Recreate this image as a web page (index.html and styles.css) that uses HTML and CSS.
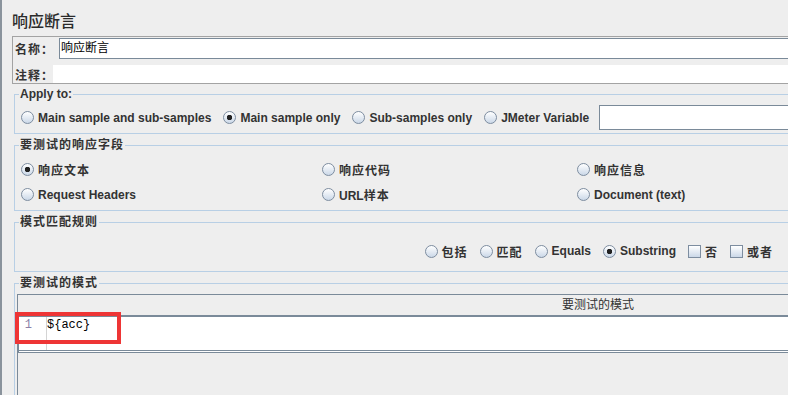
FILE: index.html
```html
<!DOCTYPE html>
<html lang="zh-CN">
<head>
    <meta charset="UTF-8">
    <title>响应断言</title>
    <link rel="stylesheet" href="styles.css">
</head>
<body>
    <div class="page">
        <h1 class="title">响应断言</h1>

        <div class="namebox">
            <div class="name-row">
                <span class="name-label zh">名称：</span>
                <div class="name-field">响应断言</div>
            </div>
            <div class="comment-row">
                <span class="comment-label zh">注释：</span>
                <div class="comment-field"></div>
            </div>
        </div>

        <!-- Apply to -->
        <div class="group group-apply">
            <div class="group-title">Apply to:</div>
            <div class="apply-row">
                <span class="opt"><span class="radio"></span>Main sample and sub-samples</span>
                <span class="opt"><span class="radio checked"></span>Main sample only</span>
                <span class="opt"><span class="radio"></span>Sub-samples only</span>
                <span class="opt"><span class="radio"></span>JMeter Variable</span>
                <div class="var-field"></div>
            </div>
        </div>

        <!-- 要测试的响应字段 -->
        <div class="group">
            <div class="group-title zh">要测试的响应字段</div>
            <div class="fields-grid">
                <span class="opt"><span class="radio checked"></span><span class="zh">响应文本</span></span>
                <span class="opt"><span class="radio"></span><span class="zh">响应代码</span></span>
                <span class="opt"><span class="radio"></span><span class="zh">响应信息</span></span>
                <span class="opt"><span class="radio"></span>Request Headers</span>
                <span class="opt"><span class="radio"></span><span>URL<span class="zh">样本</span></span></span>
                <span class="opt"><span class="radio"></span>Document (text)</span>
            </div>
        </div>

        <!-- 模式匹配规则 -->
        <div class="group">
            <div class="group-title zh">模式匹配规则</div>
            <div class="match-row">
                <span class="opt"><span class="radio"></span><span class="zh">包括</span></span>
                <span class="opt"><span class="radio"></span><span class="zh">匹配</span></span>
                <span class="opt"><span class="radio"></span>Equals</span>
                <span class="opt"><span class="radio checked"></span>Substring</span>
                <span class="opt"><span class="check"></span><span class="zh">否</span></span>
                <span class="opt"><span class="check"></span><span class="zh">或者</span></span>
            </div>
        </div>

        <!-- 要测试的模式 -->
        <div class="group">
            <div class="group-title zh">要测试的模式</div>
            <div class="table">
                <div class="table-head">要测试的模式</div>
                <div class="editor">
                    <div class="gutter">1</div>
                    <div class="code">${acc}</div>
                    <div class="mark"></div>
                </div>
            </div>
        </div>
    </div>
</body>
</html>
```

FILE: styles.css
```css
body {
    margin: 0;
    background-color: #eeeeee;
    overflow: hidden;
    font-family: "Liberation Sans", "Noto Sans CJK SC", sans-serif;
    font-size: 12px;
    color: #333;
}

.page {
    width: 800px;
    height: 395px;
    box-sizing: border-box;
    border-left: 2px solid #8a939c;
    padding: 10px 0 0 10px;
    overflow: hidden;
}

.title {
    margin: 0 0 6px;
    font-family: "Noto Sans CJK SC", sans-serif;
    font-size: 16px;
    line-height: 20px;
    font-weight: 500;
    color: #2b2b2b;
}

.zh {
    letter-spacing: 1px;
}

/* name / comment box */
.namebox {
    border: 1px solid #a3a3a3;
    border-right: none;
    padding: 1px 0 0 1px;
}

.name-row,
.comment-row {
    display: flex;
    align-items: center;
}

.name-row {
    height: 21px;
}

.comment-row {
    height: 18px;
    margin-top: 6px;
}

.name-label,
.comment-label {
    flex-shrink: 0;
    font-weight: bold;
    white-space: nowrap;
    padding-left: 1px;
    box-sizing: border-box;
}

.name-label {
    width: 45px;
}

.comment-label {
    width: 39px;
}

.name-field {
    flex: 1;
    height: 21px;
    box-sizing: border-box;
    border: 1px solid #7a8a99;
    border-right: none;
    background-color: #fff;
    padding-left: 1px;
    line-height: 19px;
    color: #000;
}

.comment-field {
    flex: 1;
    height: 18px;
    background-color: #fff;
}

/* titled groups */
.group {
    margin: 11px 0 0 2px;
    border: 1px solid #b8cfe5;
    border-right: none;
}

.group-apply {
    margin-top: 10px;
}

.group-title {
    width: fit-content;
    margin: -8px 0 0 4px;
    padding: 0 1px;
    background-color: #eeeeee;
    line-height: 14px;
    font-weight: bold;
}

.opt {
    display: flex;
    align-items: center;
    gap: 4px;
    font-weight: bold;
    white-space: nowrap;
}

.radio,
.check {
    width: 13px;
    height: 13px;
    box-sizing: border-box;
    border: 1px solid #7d8da0;
    background: linear-gradient(#ffffff, #cbd8e8);
    flex-shrink: 0;
}

.radio {
    border-radius: 50%;
}

.radio.checked {
    background:
        radial-gradient(circle, #222 0 2.5px, transparent 3px),
        linear-gradient(#ffffff, #cbd8e8);
}

.apply-row {
    display: flex;
    align-items: center;
    gap: 12px;
    height: 25px;
    margin: 4px 0 3px;
    padding-left: 6px;
}

.var-field {
    flex: 1;
    height: 25px;
    box-sizing: border-box;
    margin-left: -2px;
    border: 1px solid #7a8a99;
    border-right: none;
    background-color: #fff;
}

.fields-grid {
    display: grid;
    grid-template-columns: 301px 255px 1fr;
    grid-auto-rows: 25px;
    align-items: center;
    margin: 5px 0 3px;
    padding-left: 6px;
}

.match-row {
    display: flex;
    justify-content: flex-end;
    align-items: center;
    gap: 12px;
    height: 20px;
    margin: 12px 0 10px;
    padding-right: 27px;
}

/* pattern table */
.table {
    width: 1160px;
    height: 130px;
    margin: 4px 0 0 2px;
    border-left: 1px solid #7a8a99;
    border-top: 1px solid #7a8a99;
}

.table-head {
    height: 20px;
    line-height: 20px;
    text-align: center;
    border-bottom: 2px solid #7a8a99;
    color: #333;
}

.editor {
    position: relative;
    display: flex;
    height: 33px;
    background-color: #fff;
    border-left: 1px solid #7a8a99;
    border-bottom: 3px double #7a8a99;
    font-family: "Liberation Mono", monospace;
    font-size: 12px;
    line-height: 15px;
}

.gutter {
    width: 28px;
    box-sizing: border-box;
    border-right: 1px solid #d4d4d4;
    padding: 1px 14px 0 0;
    text-align: right;
    color: #8b7fa8;
}

.code {
    padding-top: 1px;
    color: #000;
}

/* red highlight box */
.mark {
    position: absolute;
    left: -4px;
    top: -5px;
    width: 106px;
    height: 32px;
    box-sizing: border-box;
    border: 4px solid #ee3535;
}
```
